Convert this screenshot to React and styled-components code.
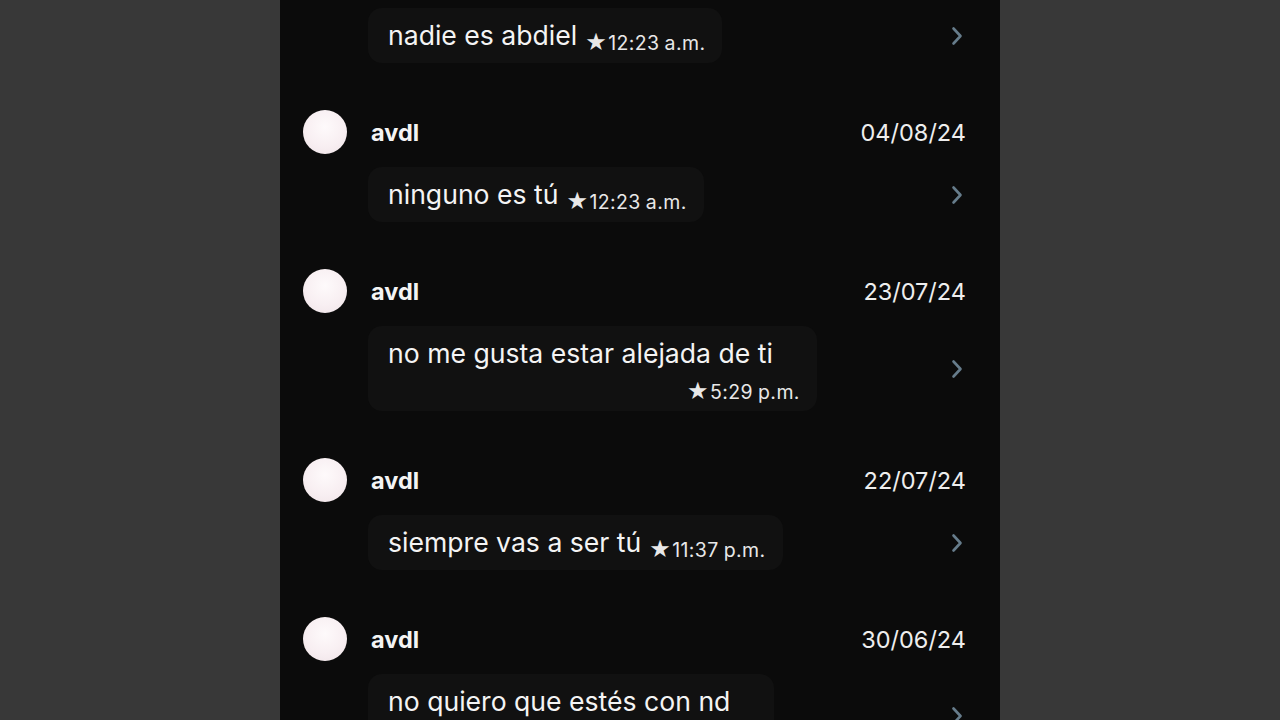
import React from "react";
import styled, { createGlobalStyle } from "styled-components";

const GlobalStyle = createGlobalStyle`
  html, body {
    margin: 0;
    padding: 0;
    height: 720px;
    overflow: hidden;
    background: #383838;
  }
  #root {
    height: 720px;
  }
`;

const entries = [
  { text: "nadie es abdiel", time: "12:23", ampm: "a.m.", noHeader: true },
  { name: "avdl", date: "04/08/24", text: "ninguno es tú", time: "12:23", ampm: "a.m." },
  { name: "avdl", date: "23/07/24", text: "no me gusta estar alejada de ti", time: "5:29", ampm: "p.m.", stacked: true },
  { name: "avdl", date: "22/07/24", text: "siempre vas a ser tú", time: "11:37", ampm: "p.m." },
  { name: "avdl", date: "30/06/24", text: "no quiero que estés con nd", stacked: true },
];

const App = () => {
  return (
    <>
      <GlobalStyle />
      <Page>
        <Panel>
          {entries.map((e, i) => (
            <Entry key={i}>
              {!e.noHeader && (
                <Header>
                  <Avatar />
                  <Name>{e.name}</Name>
                  <DateLabel>{e.date}</DateLabel>
                </Header>
              )}
              <BubbleRow>
                <Bubble $stacked={e.stacked}>
                  <Text $stacked={e.stacked}>{e.text}</Text>
                  {e.time ? (
                    <Meta>
                      <Star>★</Star>
                      {e.time}
                      <AmPm>{e.ampm}</AmPm>
                    </Meta>
                  ) : (
                    <MetaSpacer />
                  )}
                </Bubble>
                <Chevron viewBox="0 0 12 20">
                  <path d="M2.5 2.5 L9.5 10 L2.5 17.5" />
                </Chevron>
              </BubbleRow>
            </Entry>
          ))}
        </Panel>
      </Page>
    </>
  );
};

export default App;

const Page = styled.div`
  display: flex;
  justify-content: center;
  height: 720px;
  overflow: hidden;
`;

const Panel = styled.div`
  width: 720px;
  height: 720px;
  background: #0b0b0b;
  padding: 8px 35px 0 23px;
  box-sizing: border-box;
  display: flex;
  flex-direction: column;
  gap: 47px;
  overflow: hidden;
  font-family: Inter, "Liberation Sans", sans-serif;
  color: #f4f4f4;
`;

const Entry = styled.div`
  display: flex;
  flex-direction: column;
  gap: 13px;
  flex-shrink: 0;
`;

const Header = styled.div`
  display: flex;
  align-items: center;
  height: 44px;
`;

const Avatar = styled.div`
  width: 44px;
  height: 44px;
  border-radius: 50%;
  background: radial-gradient(circle at 50% 38%, #fefafb 0%, #f8eff2 55%, #efe3e7 100%);
  flex-shrink: 0;
`;

const Name = styled.div`
  margin-left: 24px;
  font-size: 23.5px;
  font-weight: 700;
  flex: 1;
`;

const DateLabel = styled.div`
  font-size: 23.5px;
  font-weight: 400;
  color: #eeeeee;
  margin-right: -1px;
`;

const BubbleRow = styled.div`
  display: flex;
  align-items: center;
  justify-content: space-between;
  margin-left: 65px;
`;

const Bubble = styled.div`
  display: flex;
  flex-direction: ${(p) => (p.$stacked ? "column" : "row")};
  align-items: flex-end;
  gap: ${(p) => (p.$stacked ? "12px" : "8px")};
  background: #111111;
  border-radius: 14px;
  padding: 11px 17px ${(p) => (p.$stacked ? "11px" : "12px")} 20px;
`;

const Text = styled.span`
  font-size: 26.6px;
  line-height: 32px;
  align-self: flex-start;
  padding-right: ${(p) => (p.$stacked ? "27px" : "0")};
`;

const Meta = styled.span`
  display: inline-flex;
  align-items: baseline;
  font-size: 19.5px;
  line-height: 20px;
  letter-spacing: 0.4px;
  color: #e8e8e8;
  margin-bottom: -2px;
`;

const MetaSpacer = styled.span`
  display: block;
  height: 18px;
`;

const Star = styled.span`
  font-family: "DejaVu Sans", sans-serif;
  font-size: 24px;
  margin-right: 1px;
`;

const AmPm = styled.span`
  margin-left: 5px;
`;

const Chevron = styled.svg`
  width: 12px;
  height: 20px;
  margin-right: 2px;
  fill: none;
  stroke: #667c8b;
  stroke-width: 2.6;
  stroke-linecap: round;
  stroke-linejoin: round;
  flex-shrink: 0;
`;
